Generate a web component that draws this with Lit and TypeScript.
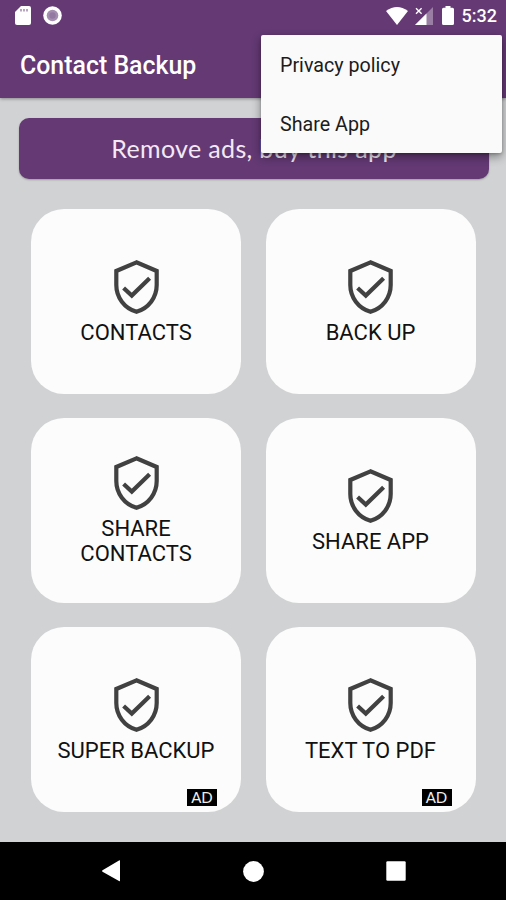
import { LitElement, html, css, svg, nothing } from "lit";
import { customElement, property } from "lit/decorators.js";

interface Tile {
  label: string;
  ad?: boolean;
}

const TILES: Tile[] = [
  { label: "CONTACTS" },
  { label: "BACK UP" },
  { label: "SHARE CONTACTS" },
  { label: "SHARE APP" },
  { label: "SUPER BACKUP", ad: true },
  { label: "TEXT TO PDF", ad: true },
];

@customElement("status-bar")
class StatusBar extends LitElement {
  static styles = css`
    :host {
      display: flex;
      align-items: center;
      height: 31px;
      padding: 0 9px 0 15px;
      color: #fff;
      font: 500 18px/31px Roboto, sans-serif;
    }
    svg { display: block; fill: #fff; }
    .card { margin-right: 12px; }
    .space { flex: 1; }
    .wifi { margin-right: 7px; }
    .signal { margin-right: 9px; }
    .battery { margin-right: 8px; }
  `;
  render() {
    return html`
      <svg class="card" width="16" height="19" viewBox="0 0 16 19">
        <path d="M6 0H14Q16 0 16 2V17Q16 19 14 19H2Q0 19 0 17V6Z" />
        <path d="M6 3V5.5M9 3V5.5M12 3V5.5" stroke="#8a6a9a" stroke-width="1.2" />
      </svg>
      <svg width="19" height="19" viewBox="0 0 19 19">
        <circle cx="9.5" cy="9.5" r="9.3" />
        <circle cx="9.5" cy="9.5" r="5.8" fill="#a58fb1" />
        <circle cx="9.5" cy="9.5" r="3.2" fill="#937aa2" />
      </svg>
      <span class="space"></span>
      <svg class="wifi" width="22" height="18" viewBox="0 0 22 18">
        <path d="M0 4Q11 -4 22 4L11 18Z" />
      </svg>
      <svg class="signal" width="18" height="18" viewBox="0 0 18 18">
        <path d="M18 0V18H0Z" opacity=".35" />
        <path d="M11.5 6.5V18H0Z" />
        <path d="M1 1.2L6.6 6.8M6.6 1.2L1 6.8" stroke="#fff" stroke-width="1.4" />
      </svg>
      <svg class="battery" width="12" height="19" viewBox="0 0 12 19">
        <path d="M3.5 0H8.5V1.8H10.5Q12 1.8 12 3.3V17.5Q12 19 10.5 19H1.5Q0 19 0 17.5V3.3Q0 1.8 1.5 1.8H3.5Z" />
      </svg>
      <span>5:32</span>
    `;
  }
}

@customElement("action-tile")
class ActionTile extends LitElement {
  @property() label = "";
  @property({ type: Boolean }) ad = false;

  static styles = css`
    :host {
      position: relative;
      display: flex;
      flex-direction: column;
      align-items: center;
      justify-content: center;
      box-sizing: border-box;
      padding: 1px 40px 0;
      border-radius: 33px;
      background: #fcfcfc;
      color: #111;
      font: 400 22px/25px Roboto, sans-serif;
      text-align: center;
    }
    :host([ad]) { padding: 1px 20px 0; }
    svg { display: block; margin: 1px 0 6px; fill: none; stroke: #414141; }
    .badge {
      position: absolute;
      right: 24px;
      bottom: 6px;
      width: 30px;
      height: 17px;
      background: #000;
      color: #eee;
      font: 400 15px/17px Lato, sans-serif;
    }
  `;
  render() {
    return html`
      <svg width="45" height="54" viewBox="0 0 45 54">
        ${svg`<path d="M22.5 2.4L2.3 11V25C2.3 37.3 10.3 48.2 22.5 51.7C34.7 48.2 42.7 37.3 42.7 25V11Z" stroke-width="4.2"/>
        <path d="M9.6 28L17.8 35.6L35.6 18.2" stroke-width="4.2"/>`}
      </svg>
      <span>${this.label}</span>
      ${this.ad ? html`<span class="badge">AD</span>` : nothing}
    `;
  }
}

@customElement("app-root")
class AppRoot extends LitElement {
  static styles = css`
    :host {
      position: relative;
      display: flex;
      flex-direction: column;
      height: 900px;
      overflow: hidden;
      background: #d0d2d3;
      font-family: Roboto, sans-serif;
    }
    .bar {
      flex: none;
      height: 98px;
      background: #643974;
      box-shadow: 0 1px 3px rgba(0, 0, 0, 0.35);
    }
    .title {
      margin: 0;
      padding-left: 20px;
      color: #fff;
      font-size: 24.9px;
      font-weight: 500;
      line-height: 70px;
    }
    .content { flex: 1; padding: 20px 17px 0 19px; }
    .remove {
      display: block;
      width: 470px;
      height: 61px;
      padding: 0;
      border: 0;
      border-radius: 10px;
      background: #643974;
      box-shadow: 0 1px 2px rgba(0, 0, 0, 0.25);
      color: #f3e9f6;
      font: 400 25px/61px Lato, sans-serif;
      letter-spacing: 0.35px;
      text-align: center;
    }
    .grid {
      display: grid;
      grid-template-columns: 210px 210px;
      grid-auto-rows: 184.5px;
      gap: 24.5px;
      margin: 30px 0 0 12px;
    }
    .menu {
      position: absolute;
      top: 35px;
      right: 4px;
      box-sizing: border-box;
      width: 241px;
      height: 118px;
      padding-top: 1px;
      border-radius: 2px;
      background: #fafafa;
      box-shadow: 0 4px 10px rgba(0, 0, 0, 0.38), 0 1px 3px rgba(0, 0, 0, 0.2);
      color: #1c1c1c;
      font-size: 19.7px;
      line-height: 59px;
    }
    .item { padding-left: 19px; }
    .nav {
      flex: none;
      display: flex;
      align-items: center;
      justify-content: center;
      gap: 122px;
      height: 58px;
      background: #000;
    }
    .nav svg { display: block; fill: #fff; }
  `;
  render() {
    return html`
      <header class="bar">
        <status-bar></status-bar>
        <h1 class="title">Contact Backup</h1>
      </header>
      <main class="content">
        <button class="remove">Remove ads, buy this app</button>
        <div class="grid">
          ${TILES.map((t) => html`<action-tile .label=${t.label} ?ad=${t.ad}></action-tile>`)}
        </div>
      </main>
      <nav class="nav">
        <svg width="20" height="22" viewBox="0 0 20 22"><path d="M19 .6V20.6Q19 21.6 18 21L1.5 11.8Q.5 11 1.5 10.3L18 .6Q19 0 19 .6Z" /></svg>
        <svg width="21" height="21" viewBox="0 0 21 21"><circle cx="10.5" cy="10.5" r="10.4" /></svg>
        <svg width="20" height="20" viewBox="0 0 20 20"><rect x=".3" y=".3" width="19.4" height="19.4" rx="1.2" /></svg>
      </nav>
      <div class="menu">
        <div class="item">Privacy policy</div>
        <div class="item">Share App</div>
      </div>
    `;
  }
}
